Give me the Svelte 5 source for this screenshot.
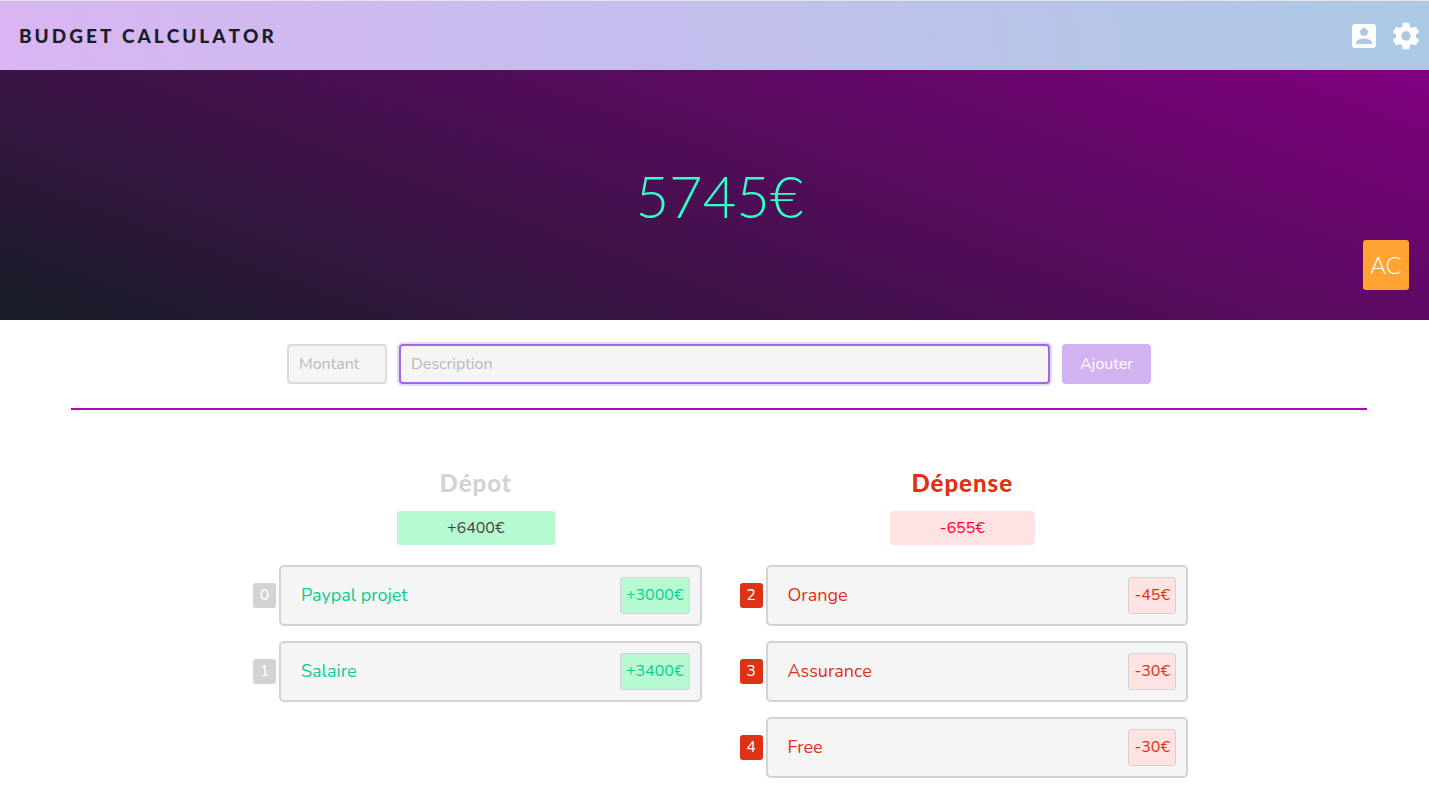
<script>
  let montant = $state('');
  let description = $state('');

  const groups = [
    {
      kind: 'depot',
      title: 'Dépot',
      total: '+6400€',
      items: [
        { id: 0, label: 'Paypal projet', amount: '+3000€' },
        { id: 1, label: 'Salaire', amount: '+3400€' }
      ]
    },
    {
      kind: 'depense',
      title: 'Dépense',
      total: '-655€',
      items: [
        { id: 2, label: 'Orange', amount: '-45€' },
        { id: 3, label: 'Assurance', amount: '-30€' },
        { id: 4, label: 'Free', amount: '-30€' }
      ]
    }
  ];
</script>

<header class="topbar">
  <h1>BUDGET CALCULATOR</h1>
  <nav>
    <button type="button" class="icon" aria-label="Compte">
      <svg viewBox="0 0 24 24"><path d="M3 5v14c0 1.1.89 2 2 2h14c1.1 0 2-.9 2-2V5c0-1.1-.9-2-2-2H5c-1.11 0-2 .9-2 2zm12 4c0 1.66-1.34 3-3 3s-3-1.34-3-3 1.34-3 3-3 3 1.34 3 3zm-9 8c0-2 4-3.1 6-3.1s6 1.1 6 3.1v1H6v-1z" /></svg>
    </button>
    <button type="button" class="icon" aria-label="Paramètres">
      <svg viewBox="0 0 24 24"><path d="M19.43 12.98c.04-.32.07-.64.07-.98s-.03-.66-.07-.98l2.11-1.65c.19-.15.24-.42.12-.64l-2-3.46c-.12-.22-.39-.3-.61-.22l-2.49 1c-.52-.4-1.08-.73-1.69-.98l-.38-2.65C14.46 2.18 14.25 2 14 2h-4c-.25 0-.46.18-.49.42l-.38 2.65c-.61.25-1.17.59-1.69.98l-2.49-1c-.23-.09-.49 0-.61.22l-2 3.46c-.13.22-.07.49.12.64l2.11 1.65c-.04.32-.07.65-.07.98s.03.66.07.98l-2.11 1.65c-.19.15-.24.42-.12.64l2 3.46c.12.22.39.3.61.22l2.49-1c.52.4 1.08.73 1.69.98l.38 2.65c.03.24.24.42.49.42h4c.25 0 .46-.18.49-.42l.38-2.65c.61-.25 1.17-.59 1.69-.98l2.49 1c.23.09.49 0 .61-.22l2-3.46c.12-.22.07-.49-.12-.64l-2.11-1.65zM12 15.5c-1.93 0-3.5-1.57-3.5-3.5s1.57-3.5 3.5-3.5 3.5 1.57 3.5 3.5-1.57 3.5-3.5 3.5z" /></svg>
    </button>
  </nav>
</header>

<section class="hero">
  <p class="balance">5745€</p>
  <button type="button" class="clear">AC</button>
</section>

<main>
  <form onsubmit={(e) => e.preventDefault()}>
    <input class="montant" type="text" placeholder="Montant" aria-label="Montant" bind:value={montant} />
    <input class="description" type="text" placeholder="Description" aria-label="Description" bind:value={description} />
    <button type="submit">Ajouter</button>
  </form>

  <hr />

  <div class="columns">
    {#each groups as group}
      <section class="column {group.kind}">
        <h2>{group.title}</h2>
        <p class="total">{group.total}</p>
        <ul>
          {#each group.items as item}
            <li>
              <span class="index">{item.id}</span>
              <div class="entry">
                <span class="label">{item.label}</span>
                <span class="amount">{item.amount}</span>
              </div>
            </li>
          {/each}
        </ul>
      </section>
    {/each}
  </div>
</main>

<style>
  :global(body) {
    background: #fff;
    font-family: Nunito, Lato, sans-serif;
    font-size: 16px;
    color: #444;
  }

  button,
  input {
    font: inherit;
    box-sizing: border-box;
  }

  .topbar {
    display: flex;
    align-items: center;
    justify-content: space-between;
    box-sizing: border-box;
    height: 70px;
    padding: 0 7px 0 19px;
    border-top: 1px solid #e4e4e4;
    background: linear-gradient(80deg, #d9b5f2, #abc9e5);
  }

  h1 {
    margin: 0;
    font: 900 19px/24px Lato, sans-serif;
    font-kerning: none;
    letter-spacing: 3px;
    color: #191d28;
  }

  nav {
    display: flex;
    gap: 10px;
  }

  .icon {
    display: flex;
    padding: 0;
    border: 0;
    background: none;
    cursor: pointer;
  }

  .icon svg {
    width: 32px;
    height: 32px;
    fill: #fff;
  }

  .hero {
    position: relative;
    display: flex;
    align-items: center;
    justify-content: center;
    height: 250px;
    padding-left: 10px;
    background: linear-gradient(20deg, #171d27, #800080);
  }

  .balance {
    margin: 0;
    padding-top: 2px;
    font: 300 58px/72px Lato, sans-serif;
    color: #33ffc9;
  }

  .clear {
    position: absolute;
    right: 20px;
    bottom: 30px;
    width: 46px;
    height: 50px;
    padding: 0;
    border: 0;
    border-radius: 3px;
    background: #ffa333;
    color: #fff;
    font: 300 24px/50px Lato, sans-serif;
  }

  main {
    padding: 24px 62px 14px 71px;
  }

  form {
    display: flex;
    gap: 12px;
    width: 66.6667%;
    margin: 0 auto;
  }

  input {
    height: 40px;
    padding: 0 10px;
    border: 2px solid #dbdbdb;
    border-radius: 4px;
    background: #f5f5f5;
    outline: none;
    color: #444;
  }

  input::placeholder {
    color: #b9b9b9;
    opacity: 1;
  }

  .montant {
    width: 100px;
  }

  .description {
    flex: 1;
    min-width: 0;
    border-color: #a267e4;
    box-shadow: 0 0 0 2px #e6d6f8;
  }

  form button {
    width: 89px;
    height: 40px;
    padding: 0;
    border: 0;
    border-radius: 4px;
    background: #d1b3f1;
    color: #fff;
  }

  hr {
    height: 2px;
    margin: 24px 0 0;
    border: 0;
    background: #a90fb0;
  }

  .columns {
    display: grid;
    grid-template-columns: 1fr 1fr;
    gap: 1px;
    width: 75%;
    margin: 58px auto 0;
  }

  .column {
    display: flex;
    flex-direction: column;
    align-items: center;
  }

  h2 {
    margin: 0;
    font: 900 24px/30px Lato, sans-serif;
    letter-spacing: 1px;
  }

  .total {
    margin: 13px 0 20px;
    padding: 0 50px;
    border-radius: 3px;
    line-height: 34px;
  }

  ul {
    display: flex;
    flex-direction: column;
    gap: 15px;
    box-sizing: border-box;
    width: 100%;
    margin: 0;
    padding: 0 17px 0 20px;
    list-style: none;
  }

  li {
    display: flex;
    align-items: center;
    gap: 3px;
  }

  .index {
    width: 23px;
    border-radius: 3px;
    color: #fff;
    line-height: 25px;
    text-align: center;
  }

  .entry {
    display: flex;
    flex: 1;
    align-items: center;
    justify-content: space-between;
    padding: 10px 10px 10px 20px;
    border: 2px solid #d3d3d3;
    border-radius: 5px;
    background: #f5f5f5;
  }

  .label {
    padding-bottom: 2px;
    font-size: 18px;
  }

  .amount {
    padding: 0 5px;
    border: 1px solid #d3d3d3;
    border-radius: 3px;
    line-height: 35px;
  }

  .depot h2 {
    color: #d3d3d3;
  }

  .depot .index {
    background: #d3d3d3;
  }

  .depot .entry {
    color: #06cf92;
  }

  .depot .total,
  .depot .amount {
    background: #b7fad2;
  }

  .depense h2 {
    color: #df3113;
  }

  .depense .index {
    background: #df3113;
  }

  .depense .entry {
    color: #df3113;
  }

  .depense .total,
  .depense .amount {
    background: #ffe3e3;
  }

  .depense .total {
    color: #ff001e;
  }
</style>
